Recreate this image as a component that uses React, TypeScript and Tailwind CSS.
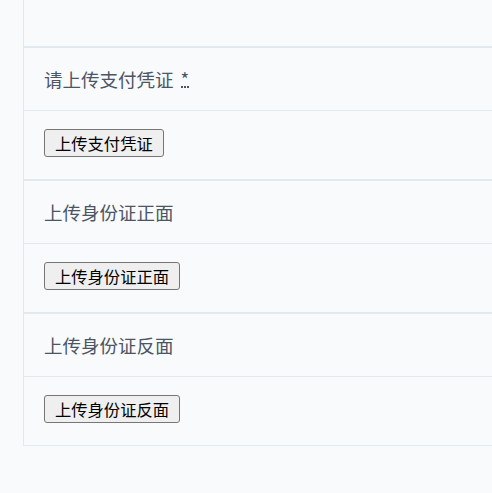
import React from 'react';

const sections = [
  { label: '请上传支付凭证', button: '上传支付凭证', required: true },
  { label: '上传身份证正面', button: '上传身份证正面', required: false },
  { label: '上传身份证反面', button: '上传身份证反面', required: false },
];

export default function App() {
  return (
    <div
      className="min-h-screen bg-[#f8fafc] pl-[23px] overflow-hidden"
      style={{ fontFamily: '"Noto Sans CJK SC", "Noto Sans", sans-serif' }}
    >
      <div className="border-l border-b border-[#e2e8f0]">
        <div className="h-[48px] border-b-2 border-[#e2e8f0]" />
        {sections.map((s, i) => (
          <div key={s.label}>
            <div className="h-[63px] flex items-center px-5 border-b border-[#e2e8f0] text-[18.5px] leading-[24px] text-[#4b5563]">
              <span>{s.label}</span>
              {s.required && (
                <abbr
                  title="required"
                  className="ml-[7px] no-underline border-b-2 border-dotted border-[#4b5563] leading-[14px] pt-[2px]"
                >
                  *
                </abbr>
              )}
            </div>
            <div
              className={
                'px-5 pt-[18px] ' +
                (i < sections.length - 1 ? 'h-[70px] border-b-2 border-[#e2e8f0]' : 'h-[68px]')
              }
            >
              <button className="h-[28px] px-[10px] bg-[#efefef] border border-[#767676] rounded-[3px] text-[16.3px] leading-[24px] text-black">
                {s.button}
              </button>
            </div>
          </div>
        ))}
      </div>
    </div>
  );
}
